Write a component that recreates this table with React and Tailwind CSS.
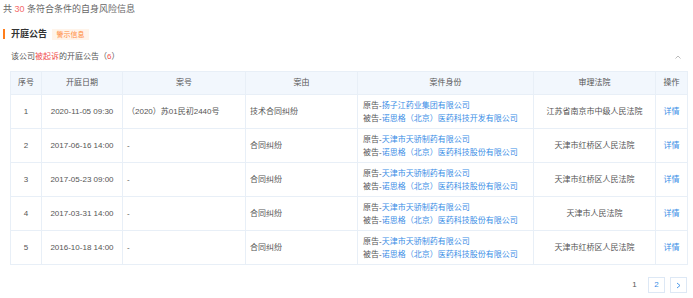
import React from "react";

const rows = [
  {
    no: 1,
    date: "2020-11-05 09:30",
    caseNo: "（2020）苏01民初2440号",
    reason: "技术合同纠纷",
    plaintiff: "扬子江药业集团有限公司",
    defendant: "诺思格（北京）医药科技开发有限公司",
    court: "江苏省南京市中级人民法院",
  },
  {
    no: 2,
    date: "2017-06-16 14:00",
    caseNo: "-",
    reason: "合同纠纷",
    plaintiff: "天津市天骄制药有限公司",
    defendant: "诺思格（北京）医药科技股份有限公司",
    court: "天津市红桥区人民法院",
  },
  {
    no: 3,
    date: "2017-05-23 09:00",
    caseNo: "-",
    reason: "合同纠纷",
    plaintiff: "天津市天骄制药有限公司",
    defendant: "诺思格（北京）医药科技股份有限公司",
    court: "天津市红桥区人民法院",
  },
  {
    no: 4,
    date: "2017-03-31 14:00",
    caseNo: "-",
    reason: "合同纠纷",
    plaintiff: "天津市天骄制药有限公司",
    defendant: "诺思格（北京）医药科技股份有限公司",
    court: "天津市人民法院",
  },
  {
    no: 5,
    date: "2016-10-18 14:00",
    caseNo: "-",
    reason: "合同纠纷",
    plaintiff: "天津市天骄制药有限公司",
    defendant: "诺思格（北京）医药科技股份有限公司",
    court: "天津市红桥区人民法院",
  },
];

const App = () => {
  return (
    <div
      className="w-[693px] h-[298px] bg-white text-[#666] overflow-hidden"
      style={{ fontFamily: '"Liberation Sans", "Noto Sans CJK SC", sans-serif' }}
    >
      <div className="pl-[3px] pt-[3px] h-[16px] text-[9px] leading-[12px] text-[#666]">
        共 <span className="text-[#f56c6c]">30</span> 条符合条件的自身风险信息
      </div>

      <div className="flex items-center h-[12px] mt-[12px] pl-[3px]">
        <div className="w-[2px] h-[10px] bg-[#ff7d1a]" />
        <span className="ml-[6px] text-[9px] leading-[12px] font-bold text-[#333]">开庭公告</span>
        <span className="ml-[5px] w-[37px] h-[11px] leading-[11px] text-center text-[7px] text-[#ff8a3d] bg-[#fff4ea]">
          警示信息
        </span>
      </div>

      <div className="flex items-center justify-between pl-[11px] pr-[12px] mt-[11px] h-[12px]">
        <div className="text-[8px] leading-[12px] text-[#555]">
          该公司<span className="text-[#f04f4f]">被起诉</span>的开庭公告（<span className="text-[#f04f4f]">6</span>）
        </div>
        <svg width="6" height="4" viewBox="0 0 6 4" className="text-[#aaa]">
          <path d="M0.5 3.5 L3 1 L5.5 3.5" fill="none" stroke="currentColor" strokeWidth="0.8" />
        </svg>
      </div>

      <div className="ml-[10px] mt-[8px] w-[677px]">
        <table className="w-full border-collapse table-fixed text-[8px] text-[#555]">
          <colgroup>
            <col className="w-[31px]" />
            <col className="w-[81px]" />
            <col className="w-[123px]" />
            <col className="w-[112px]" />
            <col className="w-[176px]" />
            <col className="w-[122px]" />
            <col className="w-[32px]" />
          </colgroup>
          <thead>
            <tr className="h-[23px] bg-[#f2f7fd] text-[#555]">
              {["序号", "开庭日期", "案号", "案由", "案件身份", "审理法院", "操作"].map((h) => (
                <th key={h} className="font-normal border border-[#e8eff7] text-center">
                  {h}
                </th>
              ))}
            </tr>
          </thead>
          <tbody>
            {rows.map((r) => (
              <tr key={r.no} className="h-[34px]">
                <td className="border border-[#e8eff7] text-center">{r.no}</td>
                <td className="border border-[#e8eff7] text-center whitespace-nowrap">{r.date}</td>
                <td className="border border-[#e8eff7] pl-[4px] whitespace-nowrap">{r.caseNo}</td>
                <td className="border border-[#e8eff7] pl-[4px]">{r.reason}</td>
                <td className="border border-[#e8eff7] pl-[5px] leading-[13px] whitespace-nowrap">
                  <div>
                    原告-<span className="text-[#3a8ee6]">{r.plaintiff}</span>
                  </div>
                  <div>
                    被告-<span className="text-[#3a8ee6]">{r.defendant}</span>
                  </div>
                </td>
                <td className="border border-[#e8eff7] text-center whitespace-nowrap">{r.court}</td>
                <td className="border border-[#e8eff7] text-center text-[#3a8ee6]">详情</td>
              </tr>
            ))}
          </tbody>
        </table>
      </div>

      <div className="flex items-center justify-end gap-[5px] pr-[6px] mt-[12px] text-[8px]">
        <span className="w-[17px] h-[16px] flex items-center justify-center text-[#555]">1</span>
        <span className="w-[17px] h-[16px] flex items-center justify-center border border-[#dde8f5] text-[#3a8ee6]">
          2
        </span>
        <span className="w-[17px] h-[16px] flex items-center justify-center border border-[#dde8f5] text-[#3a8ee6]">
          <svg width="5" height="7" viewBox="0 0 5 7">
            <path d="M1 1 L4 3.5 L1 6" fill="none" stroke="currentColor" strokeWidth="0.9" />
          </svg>
        </span>
      </div>
    </div>
  );
};

export default App;
